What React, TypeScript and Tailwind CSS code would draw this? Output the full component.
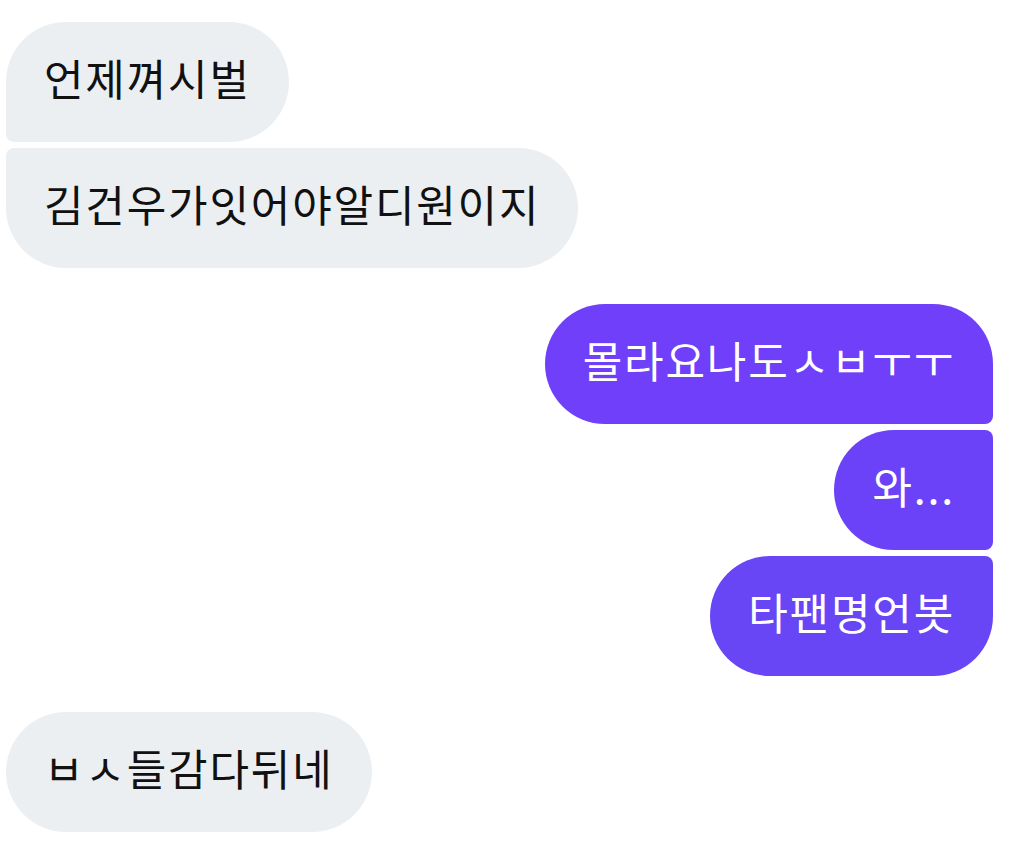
import React from 'react';

const font = { fontFamily: '"Noto Sans CJK KR", "Noto Sans", sans-serif' };

function Bubble({ text, className }: { text: string; className: string }) {
  return (
    <div className={`px-[38px] pt-[31px] pb-[41px] text-[43px] leading-[48px] tracking-[1.8px] whitespace-nowrap ${className}`}>
      {text}
    </div>
  );
}

export default function App() {
  return (
    <div className="w-[1017px] h-[853px] bg-white overflow-hidden" style={font}>
      <div className="flex flex-col pt-[22px] pl-[6px] pr-[24px]">
        {/* received */}
        <div className="flex flex-col items-start gap-[6px]">
          <Bubble text="언제껴시벌" className="bg-[#eceff2] text-[#111] rounded-[60px] rounded-bl-[8px]" />
          <Bubble text="김건우가잇어야알디원이지" className="bg-[#eceff2] text-[#111] rounded-[60px] rounded-tl-[8px]" />
        </div>

        {/* sent */}
        <div className="flex flex-col items-end gap-[6px] mt-[36px]">
          <Bubble text="몰라요나도ㅅㅂㅜㅜ" className="bg-[#6f3ff9] text-white rounded-[60px] rounded-br-[8px]" />
          <Bubble text="와..." className="bg-[#6b42f7] text-white rounded-[60px] rounded-r-[8px]" />
          <Bubble text="타팬명언봇" className="bg-[#6845f5] text-white rounded-[60px] rounded-tr-[8px]" />
        </div>

        <div className="flex flex-col items-start mt-[36px]">
          <Bubble text="ㅂㅅ들감다뒤네" className="bg-[#eceff2] text-[#111] rounded-[60px]" />
        </div>
      </div>
    </div>
  );
}
